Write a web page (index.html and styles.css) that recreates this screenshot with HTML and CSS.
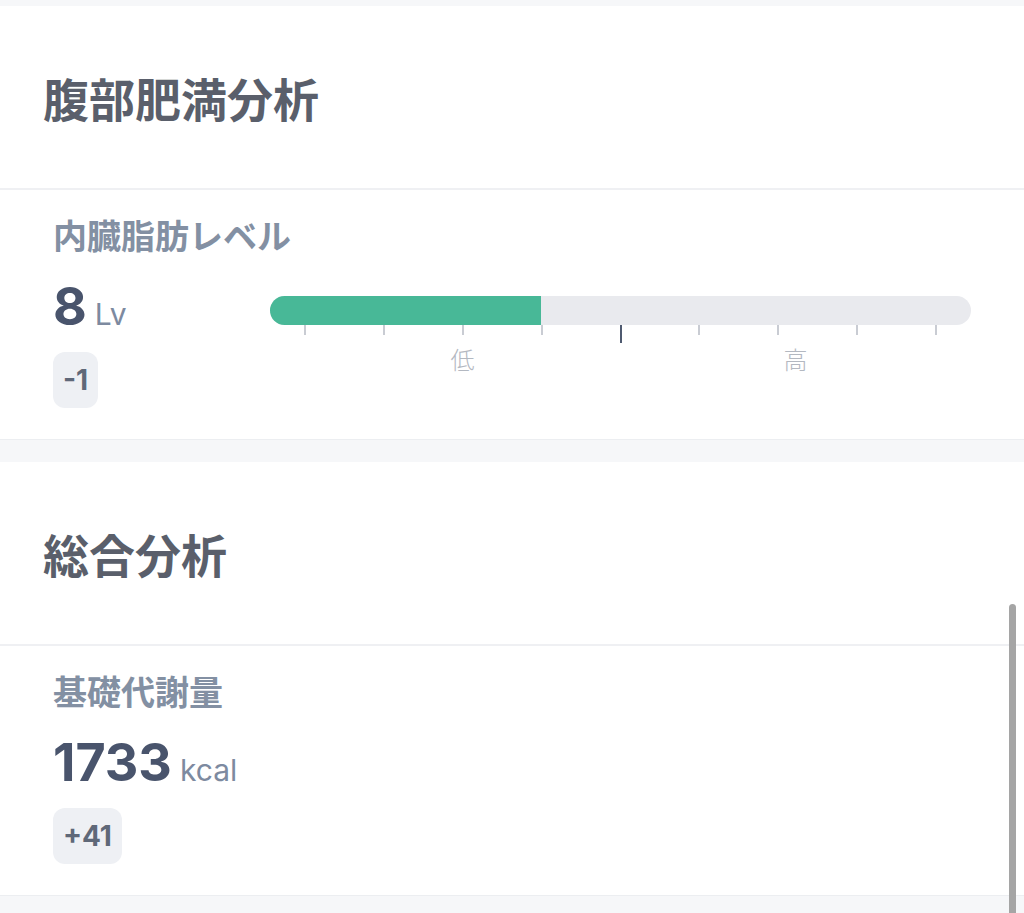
FILE: index.html
```html
<!DOCTYPE html>
<html lang="ja">
<head>
<meta charset="utf-8">
<title>分析</title>
<link rel="stylesheet" href="styles.css">
</head>
<body>
<main class="page">
  <section class="panel">
    <header class="panel-head"><h2 class="panel-title">腹部肥満分析</h2></header>
    <div class="card">
      <div class="card-label">内臓脂肪レベル</div>
      <div class="card-row">
        <div class="card-left">
          <div class="value"><span class="num">8</span><span class="unit">Lv</span></div>
          <div class="badge">-1</div>
        </div>
        <div class="gauge">
          <div class="bar"><div class="bar-fill" style="width: 271px"></div></div>
          <div class="ticks">
            <span class="tick"></span><span class="tick"></span><span class="tick"></span>
            <span class="tick"></span><span class="tick tick-now"></span><span class="tick"></span>
            <span class="tick"></span><span class="tick"></span><span class="tick"></span>
          </div>
          <div class="scale">
            <span class="scale-low">低</span>
            <span class="scale-high">高</span>
          </div>
        </div>
      </div>
    </div>
  </section>
  <section class="panel">
    <header class="panel-head"><h2 class="panel-title">総合分析</h2></header>
    <div class="card">
      <div class="card-label">基礎代謝量</div>
      <div class="card-row">
        <div class="card-left">
          <div class="value"><span class="num">1733</span><span class="unit">kcal</span></div>
          <div class="badge">+41</div>
        </div>
      </div>
    </div>
  </section>
</main>
<div class="scrollbar"></div>
</body>
</html>
```

FILE: styles.css
```css
html, body {
  margin: 0;
  padding: 0;
}
body {
  background: #f6f7f9;
  font-family: "Noto Sans CJK JP", "Inter", sans-serif;
  overflow: hidden;
}
.page {
  padding-top: 6px;
  display: flex;
  flex-direction: column;
  gap: 22px;
}
.panel {
  background: #ffffff;
}
.panel-head {
  height: 182px;
  display: flex;
  align-items: center;
  padding: 0 43px;
  border-bottom: 2px solid #eff0f3;
}
.panel-title {
  margin: 0;
  font-size: 46px;
  line-height: 1;
  font-weight: 600;
  color: #5a5f6b;
}
.card {
  height: 250px;
  box-sizing: border-box;
  padding: 25px 53px 0 53px;
  border-bottom: 1px solid #eceef1;
}
.card-label {
  font-size: 34px;
  line-height: 1.2;
  font-weight: 600;
  color: #8390a3;
}
.card-row {
  display: flex;
  align-items: flex-start;
  margin-top: 25px;
}
.card-left {
  width: 217px;
  display: flex;
  flex-direction: column;
  align-items: flex-start;
  gap: 12px;
}
.value {
  display: flex;
  align-items: baseline;
  line-height: 52px;
  font-family: "Inter", "Liberation Sans", sans-serif;
}
.num {
  font-size: 52px;
  font-weight: 700;
  color: #49546c;
}
.unit {
  font-size: 30px;
  font-weight: 400;
  color: #7d8aa0;
  margin-left: 8px;
}
.badge {
  height: 56px;
  padding: 0 10px;
  display: flex;
  align-items: center;
  border-radius: 12px;
  background: #eef0f4;
  font-family: "Inter", "Liberation Sans", sans-serif;
  font-size: 28px;
  font-weight: 700;
  color: #5f6878;
}
.gauge {
  flex: 1;
  margin-top: 15px;
}
.bar {
  height: 29px;
  border-radius: 15px;
  background: #e9eaee;
  overflow: hidden;
  display: flex;
}
.bar-fill {
  height: 100%;
  background: #48b897;
}
.ticks {
  display: flex;
  justify-content: space-between;
  align-items: flex-start;
  padding: 0 34px;
}
.tick {
  width: 2px;
  height: 10px;
  background: #c9ccd3;
}
.tick-now {
  height: 18px;
  background: #4f5a70;
}
.scale {
  display: flex;
  padding-left: 35px;
  margin-top: 1px;
  font-size: 24px;
  line-height: 30px;
  font-weight: 300;
  color: #b3b8c1;
}
.scale-low {
  width: 315px;
  text-align: center;
}
.scale-high {
  flex: 1;
  text-align: center;
}
.scrollbar {
  position: fixed;
  right: 8px;
  top: 604px;
  bottom: -10px;
  width: 7px;
  border-radius: 4px;
  background: #a5a5a5;
}
```
